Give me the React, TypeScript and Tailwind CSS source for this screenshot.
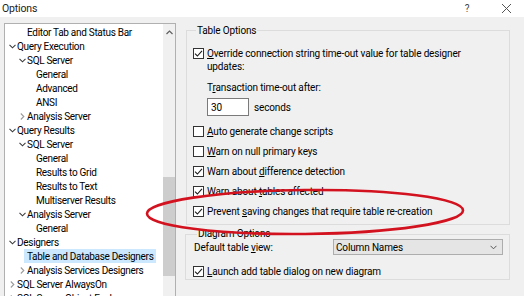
import React from "react";

type Row = { level: 0 | 1 | 2; text: string; chev?: "open" | "closed"; selected?: boolean };

const rows: Row[] = [
  { level: 1, text: "Editor Tab and Status Bar" },
  { level: 0, text: "Query Execution", chev: "open" },
  { level: 1, text: "SQL Server", chev: "open" },
  { level: 2, text: "General" },
  { level: 2, text: "Advanced" },
  { level: 2, text: "ANSI" },
  { level: 1, text: "Analysis Server", chev: "closed" },
  { level: 0, text: "Query Results", chev: "open" },
  { level: 1, text: "SQL Server", chev: "open" },
  { level: 2, text: "General" },
  { level: 2, text: "Results to Grid" },
  { level: 2, text: "Results to Text" },
  { level: 2, text: "Multiserver Results" },
  { level: 1, text: "Analysis Server", chev: "open" },
  { level: 2, text: "General" },
  { level: 0, text: "Designers", chev: "open" },
  { level: 1, text: "Table and Database Designers", selected: true },
  { level: 1, text: "Analysis Services Designers", chev: "closed" },
  { level: 0, text: "SQL Server AlwaysOn", chev: "closed" },
  { level: 0, text: "SQL Server Object Explorer", chev: "closed" },
];

function Chevron({ kind }: { kind: "open" | "closed" }) {
  if (kind === "open")
    return (
      <svg width="7" height="5" viewBox="0 0 7 5">
        <path d="M0.5 0.8 L3.5 3.8 L6.5 0.8" fill="none" stroke="#3c3c3c" strokeWidth="1.1" />
      </svg>
    );
  return (
    <svg width="5" height="7" viewBox="0 0 5 7">
      <path d="M0.8 0.5 L3.8 3.5 L0.8 6.5" fill="none" stroke="#9a9a9a" strokeWidth="1.1" />
    </svg>
  );
}

function TreeRow({ r }: { r: Row }) {
  const pl = r.level === 0 ? "pl-[2px]" : r.level === 1 ? "pl-[12px]" : "pl-[21px]";
  return (
    <div className={`h-[14px] flex items-center ${pl}`}>
      <div className="w-[10px] flex items-center justify-center">{r.chev && <Chevron kind={r.chev} />}</div>
      <div className={`h-[14px] flex items-center ${r.selected ? "bg-[#cce8ff] -ml-[3px] pl-[3px] pr-[2px]" : ""}`}>
        {r.text}
      </div>
    </div>
  );
}

function Check({ checked }: { checked: boolean }) {
  return (
    <div className="w-[11px] h-[11px] border border-[#333] bg-white flex items-center justify-center shrink-0">
      {checked && (
        <svg width="9" height="9" viewBox="0 0 9 9">
          <path d="M1 4.6 L3.4 7 L8 1.8" fill="none" stroke="#1a1a1a" strokeWidth="1.1" />
        </svg>
      )}
    </div>
  );
}

function CheckRow({ checked, children, className = "" }: { checked: boolean; children: React.ReactNode; className?: string }) {
  return (
    <div className={`flex items-start gap-[3px] ${className}`}>
      <div className="pt-[1px]">
        <Check checked={checked} />
      </div>
      <div className="leading-[13px] whitespace-nowrap">{children}</div>
    </div>
  );
}

export default function App() {
  return (
    <div
      className="w-[524px] h-[296px] bg-[#f0f0f0] overflow-hidden relative text-[10px] tracking-[-0.15px] text-black"
      style={{ fontFamily: 'Roboto, "Liberation Sans", sans-serif' }}
    >
      {/* title bar */}
      <div className="h-[17px] bg-white flex items-center">
        <div className="pl-[2px] text-[#222] text-[10.5px]">Options</div>
        <div className="ml-auto w-[12px] text-center text-[#444] mr-[28px]">?</div>
        <svg width="11" height="11" viewBox="0 0 11 11" className="mr-[12px]">
          <path d="M1 1 L10 10 M10 1 L1 10" stroke="#555" strokeWidth="1" />
        </svg>
      </div>

      <div className="flex">
        {/* tree */}
        <div className="ml-[4px] mt-[6px] w-[172px] h-[290px] border border-[#b0b0b0] bg-white flex">
          <div className="flex-1 pt-[1px] whitespace-nowrap overflow-hidden tracking-[-0.3px]">
            {rows.map((r, i) => (
              <TreeRow key={i} r={r} />
            ))}
          </div>
          <div className="w-[12px] bg-[#f0f0f0] flex flex-col items-center">
            <div className="h-[14px] flex items-center justify-center pt-[2px]">
              <svg width="7" height="5" viewBox="0 0 7 5">
                <path d="M0.5 4 L3.5 1 L6.5 4" fill="none" stroke="#606060" strokeWidth="1.2" />
              </svg>
            </div>
            <div className="h-[139px]" />
            <div className="w-[12px] h-[99px] bg-[#cdcdcd]" />
          </div>
        </div>

        {/* right */}
        <div className="ml-[10px] w-[324px]">
          <fieldset className="mt-[7px] h-[201px] border border-[#dcdcdc] px-[6px]">
            <legend className="ml-[3px] px-[1px] leading-[13px]">Table Options</legend>
            <CheckRow checked className="mt-[10px]">
              <span>
                <u>O</u>verride connection string time-out value for table designer
                <br />
                updates:
              </span>
            </CheckRow>
            <div className="ml-[14px] mt-[8px] leading-[13px]">
              T<u>r</u>ansaction time-out after:
            </div>
            <div className="ml-[14px] mt-[4px] flex items-center">
              <div className="w-[42px] h-[18px] border border-[#7a7a7a] bg-white flex items-center pl-[3px]">30</div>
              <div className="ml-[5px]">seconds</div>
            </div>
            <CheckRow checked={false} className="mt-[9px]">
              <span>
                <u>A</u>uto generate change scripts
              </span>
            </CheckRow>
            <CheckRow checked={false} className="mt-[7px]">
              <span>
                <u>W</u>arn on null primary keys
              </span>
            </CheckRow>
            <CheckRow checked className="mt-[7px]">
              <span>
                Warn about <u>d</u>ifference detection
              </span>
            </CheckRow>
            <CheckRow checked className="mt-[7px]">
              <span>
                Warn about <u>t</u>ables affected
              </span>
            </CheckRow>
            <CheckRow checked className="mt-[7px]">
              <span>
                Prevent <u>s</u>aving changes that require table re-creation
              </span>
            </CheckRow>
          </fieldset>

          <fieldset className="mt-[3px] -ml-[1px] h-[52px] border border-[#dcdcdc] px-[7px]">
            <legend className="ml-[4px] px-[1px] leading-[12px]">Diagram Options</legend>
            <div className="flex items-center -mt-[1px]">
              <div className="pl-[1px]">
                Default table <u>v</u>iew:
              </div>
              <div className="ml-auto mr-[-1px] w-[170px] h-[16px] border border-[#adadad] bg-[#e5e5e5] flex items-center pl-[2px]">
                <span>Column Names</span>
                <svg width="7" height="5" viewBox="0 0 7 5" className="ml-auto mr-[5px]">
                  <path d="M0.5 0.8 L3.5 3.8 L6.5 0.8" fill="none" stroke="#555" strokeWidth="1" />
                </svg>
              </div>
            </div>
            <CheckRow checked className="mt-[10px]">
              <span>
                <u>L</u>aunch add table dialog on new diagram
              </span>
            </CheckRow>
          </fieldset>
        </div>
      </div>

      {/* red annotation ellipse */}
      <svg className="absolute left-0 top-0 pointer-events-none" width="524" height="296">
        <ellipse cx="305" cy="212" rx="158" ry="22" fill="none" stroke="#d3121f" strokeWidth="2.6" transform="rotate(-0.6 305 212)" />
      </svg>
    </div>
  );
}
